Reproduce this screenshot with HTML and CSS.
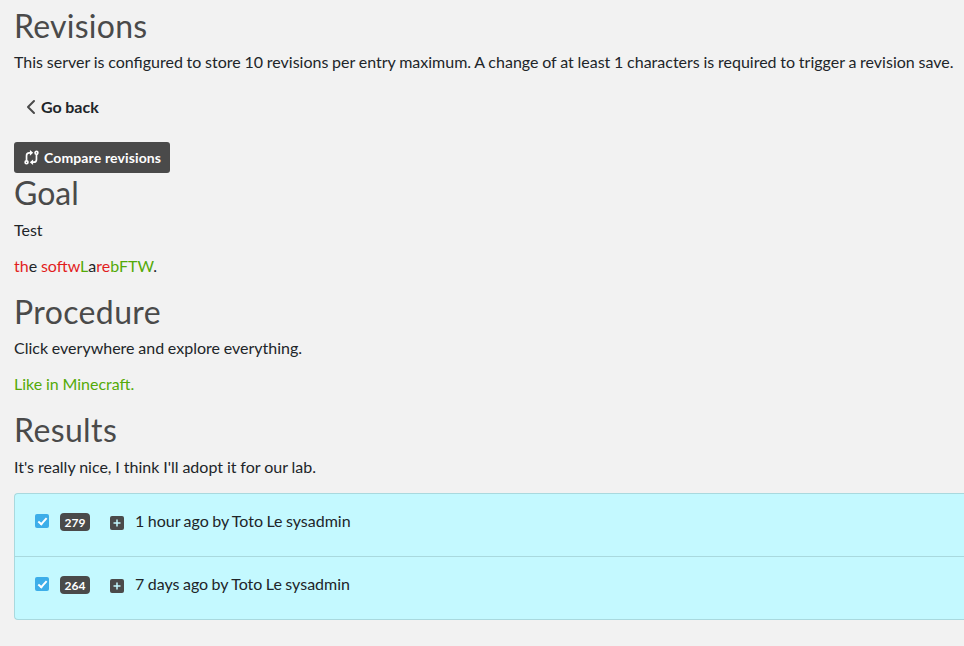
FILE: index.html
```html
<!DOCTYPE html>
<html lang="en">

<head>
	<meta charset="UTF-8" />
	<meta name="viewport" content="width=device-width, initial-scale=1.0" />
	<title>Revisions</title>
	<link rel="stylesheet" href="styles.css">
</head>

<body>
	<main class="container">
		<h2>Revisions</h2>
		<p>This server is configured to store 10 revisions per entry maximum. A change of at least 1 characters is required to trigger a revision save.</p>

		<a class="back-link" href="#">
			<svg class="back-icon" viewBox="0 0 10 16"><path d="M8 2L2 8L8 14"/></svg>
			<span>Go back</span>
		</a>

		<button type="button" class="compare-button" id="compareRevisions">
			<svg class="compare-icon" viewBox="0 0 16 16">
				<circle cx="2.700" cy="13" r="1.500"/>
				<circle cx="13.300" cy="3" r="1.500"/>
				<path d="M2.700 11.500V6Q2.700 3 5.700 3H7M13.300 4.500V10Q13.300 13 10.300 13H9"/>
				<path class="arrow" d="M6.300 0V6L9.800 3ZM9.700 10V16L6.200 13Z"/>
			</svg>
			<span>Compare revisions</span>
		</button>

		<div class="diff">
			<h2>Goal</h2>
			<p>Test</p>
			<p><del>th</del>e <del>softw</del><ins>L</ins>a<del>re</del><ins>bFTW</ins>.</p>
			<h2>Procedure</h2>
			<p>Click everywhere and explore everything.</p>
			<p><ins>Like in Minecraft.</ins></p>
			<h2>Results</h2>
			<p class="results-text">It's really nice, I think I'll adopt it for our lab.</p>
		</div>

		<ul class="revision-list">
			<li class="revision">
				<input type="checkbox" class="revision-check" aria-label="279" checked />
				<span class="badge">279</span>
				<svg class="plus-icon" viewBox="0 0 14 14"><rect width="14" height="14" rx="2"/><path d="M7 3.500V10.500M3.500 7H10.500"/></svg>
				<span class="revision-text">1 hour ago by Toto Le sysadmin</span>
			</li>
			<li class="revision">
				<input type="checkbox" class="revision-check" aria-label="264" checked />
				<span class="badge">264</span>
				<svg class="plus-icon" viewBox="0 0 14 14"><rect width="14" height="14" rx="2"/><path d="M7 3.500V10.500M3.500 7H10.500"/></svg>
				<span class="revision-text">7 days ago by Toto Le sysadmin</span>
			</li>
		</ul>
	</main>
</body>

</html>
```
FILE: styles.css
```css
* {
	box-sizing: border-box;
}

body {
	margin: 0;
	background-color: #f2f2f2;
	color: #212529;
	font-family: Lato, sans-serif;
	font-size: 16px;
	line-height: 24px;
	word-spacing: -0.350px;
	overflow: hidden;
}

.container {
	padding: 7px 0 0 14px;
}

h2 {
	margin: 0 0 5px;
	color: #4a4a4a;
	font-size: 32px;
	font-weight: 400;
	line-height: 38px;
	letter-spacing: 0.250px;
}

p {
	margin: 0 0 12px;
	white-space: nowrap;
}

.back-link {
	display: flex;
	align-items: center;
	gap: 5px;
	width: max-content;
	margin: 21px 0 23px;
	padding-left: 12px;
	color: #212529;
	font-weight: 700;
	text-decoration: none;
}

.back-icon {
	width: 10px;
	height: 16px;
	fill: none;
	stroke: #4a4a4a;
	stroke-width: 2;
	stroke-linecap: round;
	stroke-linejoin: round;
}

.compare-button {
	display: flex;
	align-items: center;
	gap: 5px;
	width: 156px;
	height: 31px;
	padding: 0 0 0 10px;
	background-color: #4a4a4a;
	border: none;
	border-radius: 3px;
	color: #ffffff;
	font-family: inherit;
	font-size: 14px;
	font-weight: 700;
	letter-spacing: 0.130px;
	white-space: nowrap;
}

.compare-icon {
	width: 15px;
	height: 15px;
	fill: none;
	stroke: #ffffff;
	stroke-width: 1.800;
}

.compare-icon .arrow {
	fill: #ffffff;
	stroke: none;
}

.diff {
	padding-top: 1px;
}

.diff h2 {
	margin-bottom: 6px;
	letter-spacing: 0;
}

.diff p + h2 {
	margin: 15px 0 5px;
	letter-spacing: 0.380px;
}

.diff del {
	color: #e21e1e;
	text-decoration: none;
}

.diff ins {
	color: #54aa08;
	text-decoration: none;
}

.diff .results-text {
	margin-top: 6px;
	word-spacing: -0.200px;
}

.revision-list {
	margin: 14px 0 0;
	padding: 0;
	list-style: none;
	background-color: #c4f9ff;
	border: 1px solid #a9d9de;
	border-right: none;
	border-radius: 4px 0 0 4px;
}

.revision {
	display: flex;
	align-items: center;
	height: 62px;
	padding: 0 20px 8px;
}

.revision + .revision {
	height: 63px;
	border-top: 1px solid #a9d9de;
}

.revision-check {
	appearance: none;
	display: flex;
	justify-content: center;
	width: 14px;
	height: 14px;
	margin: 0 11px 0 0;
	background-color: #3daee9;
	border-radius: 2px;
}

.revision-check:checked::after {
	content: "";
	width: 3px;
	height: 7px;
	margin-top: 2px;
	border: solid #ffffff;
	border-width: 0 2px 2px 0;
	transform: rotate(42deg);
}

.badge {
	width: 30px;
	height: 18px;
	margin: 1px 20px 0 0;
	background-color: #4a4a4a;
	border-radius: 4px;
	color: #ffffff;
	font-size: 12px;
	font-weight: 700;
	line-height: 19px;
	text-align: center;
}

.plus-icon {
	width: 14px;
	height: 14px;
	margin: 3px 11px 0 0;
	fill: #4a4a4a;
}

.plus-icon path {
	stroke: #c4f9ff;
	stroke-width: 1.500;
}

.revision-text {
	word-spacing: -0.650px;
}
```
